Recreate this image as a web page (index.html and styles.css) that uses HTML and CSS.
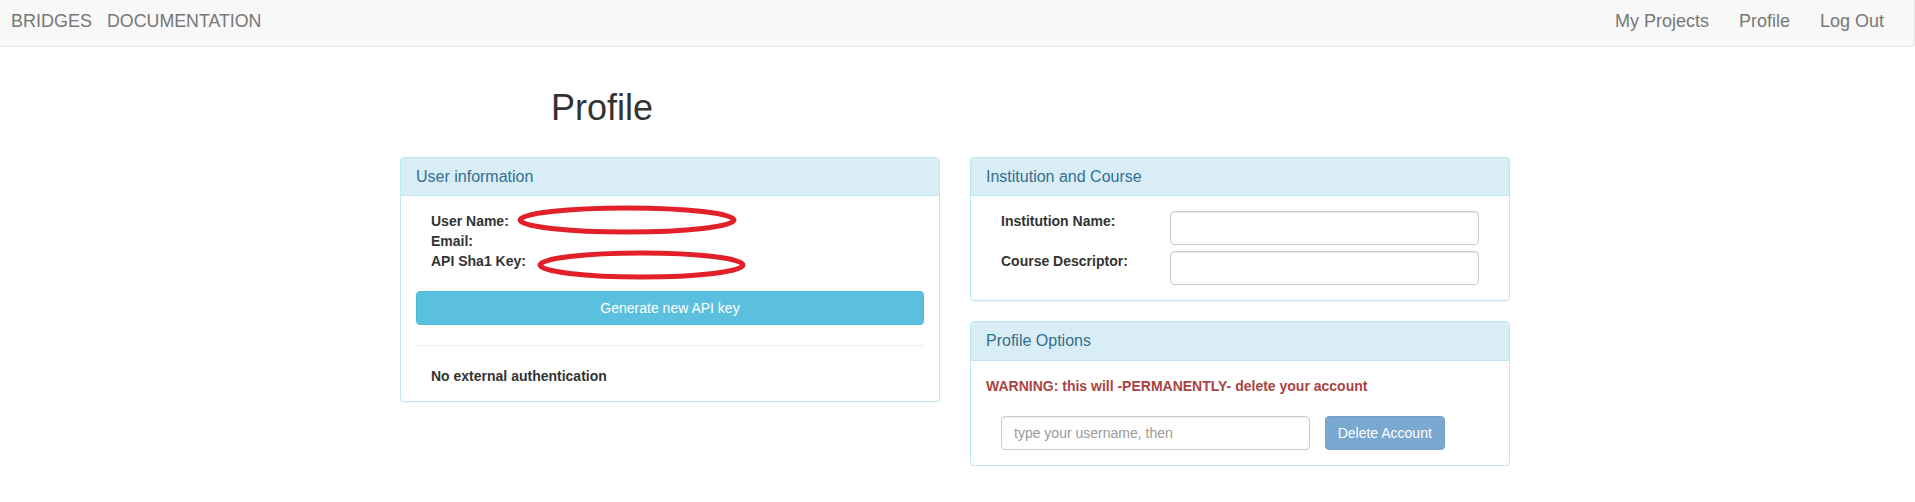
FILE: index.html
```html
<!DOCTYPE html>
<html lang="en">
<head>
<meta charset="utf-8">
<title>Profile</title>
<link rel="stylesheet" href="styles.css">
</head>
<body>
<nav class="navbar">
  <div class="nav-left">
    <a class="brand" href="#">BRIDGES</a>
    <a class="brand brand-doc" href="#">DOCUMENTATION</a>
  </div>
  <ul class="nav-right">
    <li><a href="#">My Projects</a></li>
    <li><a href="#">Profile</a></li>
    <li><a href="#">Log Out</a></li>
  </ul>
</nav>

<main class="page">
  <h1 class="title">Profile</h1>
  <div class="cols">
    <section class="panel panel-user">
      <div class="panel-heading">User information</div>
      <div class="panel-body">
        <div class="info">
          <div>User Name:</div>
          <div>Email:</div>
          <div>API Sha1 Key:</div>
        </div>
        <button class="btn btn-info" type="button">Generate new API key</button>
        <hr class="sep">
        <div class="info">No external authentication</div>
      </div>
      <svg class="redact" width="540" height="246" aria-hidden="true">
        <ellipse cx="226" cy="62" rx="107" ry="12" />
        <ellipse cx="240.5" cy="107" rx="101.5" ry="12" />
      </svg>
    </section>

    <div class="col-right">
      <section class="panel">
        <div class="panel-heading">Institution and Course</div>
        <div class="panel-body">
          <div class="form-grid">
            <label class="lbl" for="inst">Institution Name:</label>
            <div class="field"><input id="inst" class="form-control" type="text"></div>
            <label class="lbl" for="course">Course Descriptor:</label>
            <div class="field"><input id="course" class="form-control" type="text"></div>
          </div>
        </div>
      </section>

      <section class="panel">
        <div class="panel-heading">Profile Options</div>
        <div class="panel-body">
          <p class="warning">WARNING: this will -PERMANENTLY- delete your account</p>
          <div class="delete-row">
            <div class="field"><input class="form-control" type="text" placeholder="type your username, then"></div>
            <div><button class="btn btn-primary" type="button" disabled>Delete Account</button></div>
          </div>
        </div>
      </section>
    </div>
  </div>
</main>
</body>
</html>
```

FILE: styles.css
```css
* {
  box-sizing: border-box;
}

html, body {
  margin: 0;
  padding: 0;
}

body {
  font-family: "Liberation Sans", Arial, Helvetica, sans-serif;
  font-size: 14px;
  line-height: 20px;
  color: #333;
  background: #fff;
}

a {
  text-decoration: none;
}

/* Navbar */
.navbar {
  display: flex;
  justify-content: space-between;
  height: 47px;
  padding: 11px 15px 0 11px;
  background: #f8f8f8;
  border-bottom: 1px solid #e7e7e7;
  border-right: 1px solid #e7e7e7;
  border-bottom-right-radius: 4px;
}

.nav-left {
  display: flex;
  gap: 15px;
}

.brand {
  font-size: 18px;
  line-height: 20px;
  color: #777;
}

.brand-doc {
  font-size: 17.8px;
}

.nav-right {
  display: flex;
  margin: 0;
  padding: 0;
  list-style: none;
}

.nav-right a {
  display: block;
  padding: 0 15px;
  font-size: 18px;
  line-height: 20px;
  color: #777;
}

/* Page */
.page {
  margin-left: 400px;
  width: 1110px;
}

.title {
  margin: 41px 0 0;
  padding-left: 151px;
  font-size: 36px;
  line-height: 39.6px;
  font-weight: 500;
  color: #333;
}

.cols {
  display: grid;
  grid-template-columns: 540px 540px;
  column-gap: 30px;
  align-items: start;
  margin-top: 29px;
}

/* Panels */
.panel {
  position: relative;
  border: 1px solid #bce8f1;
  border-radius: 4px;
  background: #fff;
  box-shadow: 0 1px 1px rgba(0, 0, 0, 0.05);
}

.col-right {
  display: flex;
  flex-direction: column;
  gap: 20px;
}

.panel-heading {
  padding: 10px 15px;
  font-size: 16px;
  line-height: 17.6px;
  color: #31708f;
  background: #d9edf7;
  border-bottom: 1px solid #bce8f1;
  border-radius: 3px 3px 0 0;
}

.panel-body {
  padding: 15px;
}

.info {
  padding-left: 15px;
  font-weight: bold;
  line-height: 20px;
}

.sep {
  margin: 20px 0;
  border: 0;
  border-top: 1px solid #eee;
  height: 0;
}

/* Buttons */
.btn {
  display: inline-block;
  height: 34px;
  padding: 6px 12px;
  font-family: inherit;
  font-size: 14px;
  line-height: 20px;
  color: #fff;
  border: 1px solid transparent;
  border-radius: 4px;
  white-space: nowrap;
}

.btn-info {
  display: block;
  width: 100%;
  margin-top: 20px;
  background: #5bc0de;
  border-color: #46b8da;
}

.btn-primary {
  background: #337ab7;
  border-color: #2e6da4;
  opacity: 0.65;
}

/* Forms */
.form-grid {
  display: grid;
  grid-template-columns: 1fr 2fr;
  row-gap: 6px;
}

.lbl {
  padding-left: 15px;
  font-weight: bold;
  line-height: 20px;
}

.field {
  padding: 0 15px;
}

.form-control {
  display: block;
  width: 100%;
  height: 34px;
  padding: 6px 12px;
  font-family: inherit;
  font-size: 14px;
  line-height: 20px;
  color: #555;
  background: #fff;
  border: 1px solid #ccc;
  border-radius: 4px;
  box-shadow: inset 0 1px 1px rgba(0, 0, 0, 0.075);
}

.form-control::placeholder {
  color: #999;
}

.warning {
  margin: 0 0 20px;
  font-weight: bold;
  color: #a94442;
}

.delete-row {
  display: grid;
  grid-template-columns: 2fr 1fr;
}

/* Redaction marks drawn over the user data */
.redact {
  position: absolute;
  left: 0;
  top: 0;
  overflow: visible;
  pointer-events: none;
}

.redact ellipse {
  fill: none;
  stroke: #e2202a;
  stroke-width: 5;
}
```
